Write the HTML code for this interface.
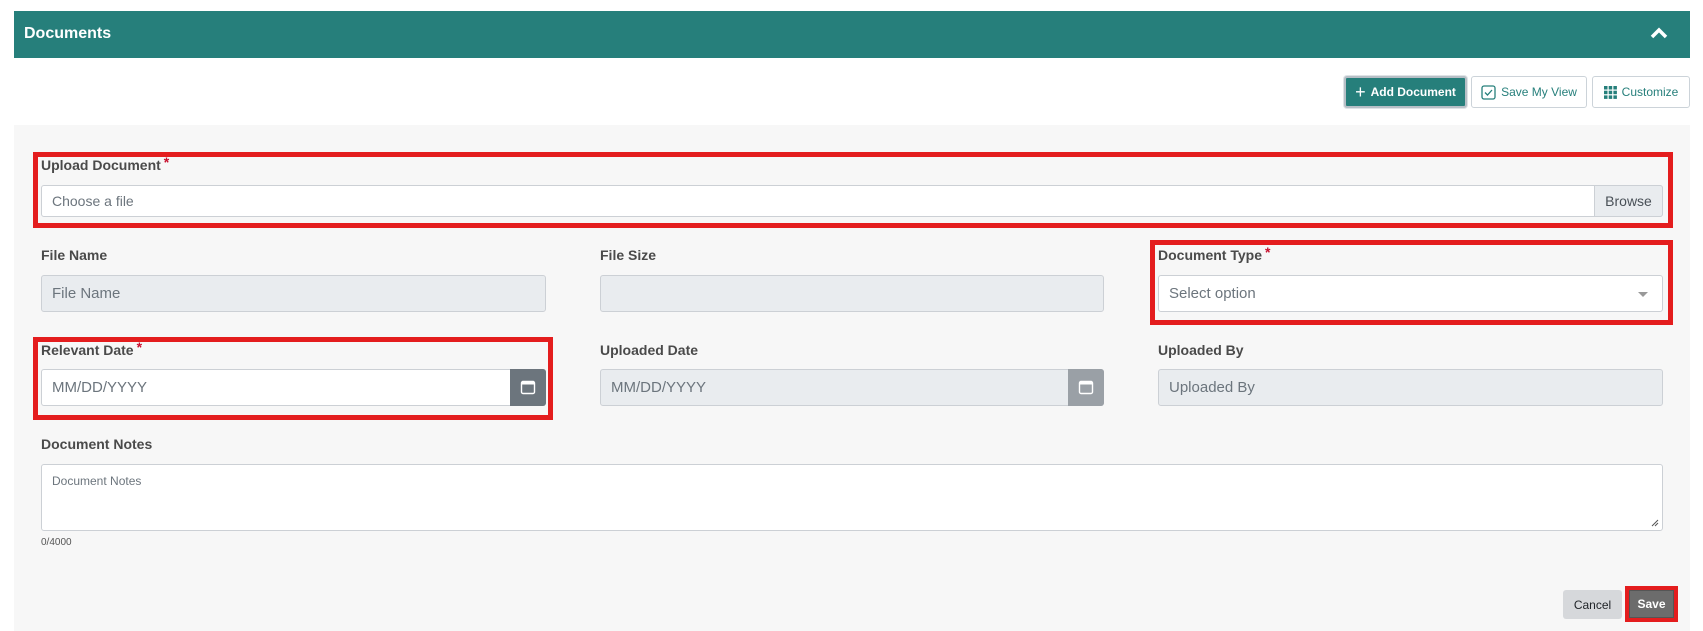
<!DOCTYPE html>
<html><head><meta charset="utf-8"><style>
*{box-sizing:border-box;margin:0;padding:0}
body{width:1703px;height:631px;background:#fff;font-family:"Liberation Sans",Arial,sans-serif;position:relative;overflow:hidden}
.a{position:absolute}
.hdr{left:14px;top:11px;width:1676px;height:47px;background:#267f7b;color:#fff;font-weight:bold;font-size:16px;line-height:45px;padding-left:10px}
.btn{top:76px;height:32px;border:1px solid #ccd3d9;border-radius:3px;background:#fff;color:#267f7b;font-size:12px;display:flex;align-items:center;justify-content:center;gap:5px}
.panel{left:14px;top:125px;width:1676px;height:506px;background:#f7f7f7}
.red{border:5px solid #e41d1e}
.lbl{font-size:14px;font-weight:bold;color:#4a4a4a}
.lbl i{color:#c8102e;font-style:normal;font-size:14px;position:relative;top:-3px;margin-left:3px}
.in{height:37px;border:1px solid #ccd0d5;border-radius:3px;background:#fff;font-size:15px;color:#6c757d;padding-left:10px;display:flex;align-items:center}
.dis{background:#e9ecef}
.cal{position:absolute;right:-1px;top:-1px;bottom:-1px;width:36px;border-radius:0 3px 3px 0;display:flex;align-items:center;justify-content:center}
</style></head><body>
<div class="a hdr">Documents</div>
<svg class="a" style="left:1650px;top:27px" width="18" height="12" viewBox="0 0 18 12"><path d="M2 10 L9 3 L16 10" stroke="#fff" stroke-width="3.5" fill="none"/></svg>

<div class="a btn" style="left:1344px;width:123px;background:#267f7b;color:#fff;font-weight:bold;border:2px solid #b7bfc6;box-shadow:0 0 0 1px #dfe3e6"><span style="font-size:18px;font-weight:normal;line-height:1">+</span>Add Document</div>
<div class="a btn" style="left:1471px;width:116px"><svg width="15" height="15" viewBox="0 0 15 15"><rect x="1" y="1" width="13" height="13" rx="2" fill="none" stroke="#267f7b" stroke-width="1.3"/><path d="M4 7.5 L6.5 10 L11 5" fill="none" stroke="#267f7b" stroke-width="1.3"/></svg>Save My View</div>
<div class="a btn" style="left:1592px;width:98px"><svg width="13" height="13" viewBox="0 0 13 13" fill="#267f7b"><rect x="0" y="0" width="3.5" height="3.5"/><rect x="4.7" y="0" width="3.5" height="3.5"/><rect x="9.4" y="0" width="3.5" height="3.5"/><rect x="0" y="4.7" width="3.5" height="3.5"/><rect x="4.7" y="4.7" width="3.5" height="3.5"/><rect x="9.4" y="4.7" width="3.5" height="3.5"/><rect x="0" y="9.4" width="3.5" height="3.5"/><rect x="4.7" y="9.4" width="3.5" height="3.5"/><rect x="9.4" y="9.4" width="3.5" height="3.5"/></svg>Customize</div>

<div class="a panel"></div>

<div class="a red" style="left:33px;top:152px;width:1640px;height:76px"></div>
<div class="a lbl" style="left:41px;top:157px">Upload Document<i>*</i></div>
<div class="a in" style="left:41px;top:185px;width:1622px;height:32px;font-size:14px">Choose a file
<div style="position:absolute;right:-1px;top:-1px;bottom:-1px;width:69px;background:#e9ecef;border:1px solid #ccd0d5;border-radius:0 3px 3px 0;color:#495057;display:flex;align-items:center;justify-content:center;font-size:14px">Browse</div></div>

<div class="a lbl" style="left:41px;top:247px">File Name</div>
<div class="a in dis" style="left:41px;top:275px;width:505px">File Name</div>
<div class="a lbl" style="left:600px;top:247px">File Size</div>
<div class="a in dis" style="left:600px;top:275px;width:504px"></div>
<div class="a red" style="left:1150px;top:240px;width:523px;height:85px"></div>
<div class="a lbl" style="left:1158px;top:247px">Document Type<i>*</i></div>
<div class="a in" style="left:1158px;top:275px;width:505px">Select option
<svg style="position:absolute;right:14px;top:16px" width="10" height="6"><path d="M0 0 L10 0 L5 5Z" fill="#999"/></svg></div>

<div class="a red" style="left:33px;top:337px;width:520px;height:83px"></div>
<div class="a lbl" style="left:41px;top:342px">Relevant Date<i>*</i></div>
<div class="a in" style="left:41px;top:369px;width:505px">MM/DD/YYYY
<div class="cal" style="background:#6c757d"><svg width="16" height="15" viewBox="0 0 16 15"><rect x="1.5" y="1.5" width="13" height="12" rx="1.5" fill="none" stroke="#fff" stroke-width="1.4"/><rect x="1.5" y="1.5" width="13" height="3" fill="#fff"/></svg></div></div>
<div class="a lbl" style="left:600px;top:342px">Uploaded Date</div>
<div class="a in dis" style="left:600px;top:369px;width:504px">MM/DD/YYYY
<div class="cal" style="background:#9aa0a6"><svg width="16" height="15" viewBox="0 0 16 15"><rect x="1.5" y="1.5" width="13" height="12" rx="1.5" fill="none" stroke="#fff" stroke-width="1.4"/><rect x="1.5" y="1.5" width="13" height="3" fill="#fff"/></svg></div></div>
<div class="a lbl" style="left:1158px;top:342px">Uploaded By</div>
<div class="a in dis" style="left:1158px;top:369px;width:505px">Uploaded By</div>

<div class="a lbl" style="left:41px;top:436px">Document Notes</div>
<div class="a" style="left:41px;top:464px;width:1622px;height:67px;background:#fff;border:1px solid #ccd0d5;border-radius:3px;font-size:12px;color:#6c757d;padding:9px 10px">Document Notes
<svg style="position:absolute;right:3px;bottom:3px" width="8" height="8"><path d="M7 1 L1 7 M7 4 L4 7" stroke="#555" stroke-width="1"/></svg></div>
<div class="a" style="left:41px;top:537px;font-size:10px;color:#555">0/4000</div>

<div class="a" style="left:1563px;top:590px;width:59px;height:29px;background:#d6d8db;border-radius:3px;font-size:12px;color:#212529;display:flex;align-items:center;justify-content:center">Cancel</div>
<div class="a red" style="left:1625px;top:586px;width:53px;height:36px;border-width:4px;background:#6c6c6c;color:#fff;font-size:12px;font-weight:bold;display:flex;align-items:center;justify-content:center;box-shadow:inset 0 0 0 1px #555">Save</div>
</body></html>
